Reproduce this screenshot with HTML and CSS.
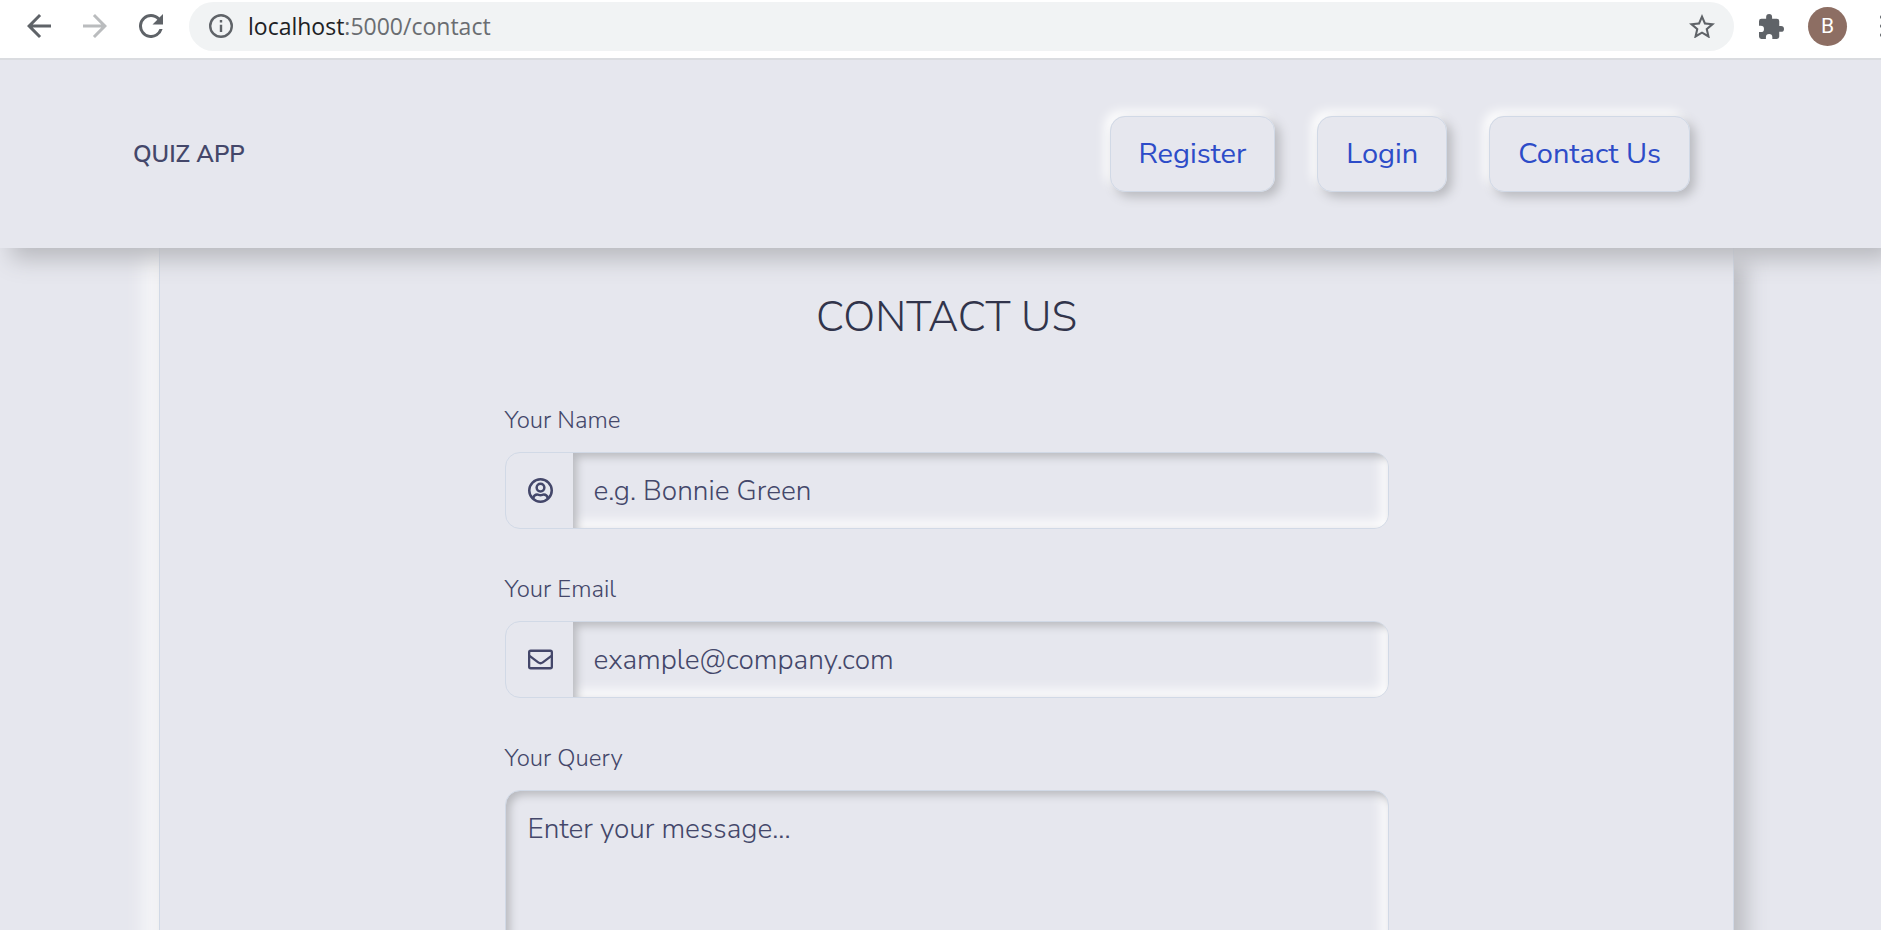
FILE: index.html
```html
<!DOCTYPE html>
<html lang="en">
<head>
<meta charset="utf-8">
<meta name="viewport" content="width=device-width, initial-scale=1">
<title>Quiz App - Contact</title>
<link rel="stylesheet" href="styles.css">
</head>
<body>
<div class="toolbar">
  <button class="tool" type="button" aria-label="Back"><svg viewBox="4 4 16 16"><path d="M20 11H7.83l5.59-5.59L12 4l-8 8 8 8 1.41-1.41L7.83 13H20v-2z"/></svg></button>
  <button class="tool tool-off" type="button" aria-label="Forward"><svg viewBox="4 4 16 16"><path d="M12 4l-1.41 1.41L16.17 11H4v2h12.17l-5.58 5.59L12 20l8-8z"/></svg></button>
  <button class="tool" type="button" aria-label="Reload"><svg viewBox="4 4 16 16"><path d="M17.65 6.35A7.96 7.96 0 0 0 12 4a8 8 0 1 0 7.74 10h-2.08A6 6 0 1 1 12 6c1.66 0 3.14.69 4.22 1.78L13 11h7V4l-2.35 2.35z"/></svg></button>
  <div class="address">
    <svg class="info" viewBox="2 2 20 20"><path d="M11 7h2v2h-2zm0 4h2v6h-2zm1-9a10 10 0 1 0 0 20 10 10 0 0 0 0-20zm0 18a8 8 0 1 1 0-16 8 8 0 0 1 0 16z"/></svg>
    <span class="url"><span class="host">localhost</span>:5000/contact</span>
    <button class="tool star" type="button" aria-label="Bookmark"><svg viewBox="2 2 20 19"><path d="M22 9.24l-7.19-.62L12 2 9.19 8.63 2 9.24l5.46 4.73L5.82 21 12 17.27 18.18 21l-1.63-7.03L22 9.24zM12 15.4l-3.76 2.27 1-4.28-3.32-2.88 4.38-.38L12 6.1l1.71 4.04 4.38.38-3.32 2.88 1 4.28L12 15.4z"/></svg></button>
  </div>
  <button class="tool puzzle" type="button" aria-label="Extensions"><svg viewBox="2 1 21 21"><path d="M20.500 11H19V7a2 2 0 0 0-2-2h-4V3.500a2.500 2.500 0 0 0-5 0V5H4a2 2 0 0 0-2 2v3.800h1.500a2.700 2.700 0 0 1 0 5.400H2V20a2 2 0 0 0 2 2h3.800v-1.500a2.700 2.700 0 0 1 5.400 0V22H17a2 2 0 0 0 2-2v-4h1.500a2.500 2.500 0 0 0 0-5z"/></svg></button>
  <button class="avatar" type="button">B</button>
  <button class="tool dots" type="button" aria-label="Menu"><svg viewBox="0 0 4 22"><circle cx="2" cy="2" r="2"/><circle cx="2" cy="11" r="2"/><circle cx="2" cy="20" r="2"/></svg></button>
</div>
<header class="navbar">
  <a class="brand" href="#">QUIZ APP</a>
  <nav class="links">
    <a class="btn" href="#">Register</a>
    <a class="btn" href="#">Login</a>
    <a class="btn" href="#">Contact Us</a>
  </nav>
</header>
<main class="card">
  <h1 class="title">CONTACT US</h1>
  <form class="form">
    <div class="field">
      <label for="name">Your Name</label>
      <div class="group">
        <span class="addon"><svg viewBox="0 0 24 24" fill="none" stroke="currentColor" stroke-width="2.400"><circle cx="12" cy="12" r="10.800"/><circle cx="12" cy="9.200" r="3.700"/><path d="M4.800 19.500c.8-2.600 2.200-3.600 4-3.600 1.200 0 1.700.6 3.200.6s2-.6 3.200-.6c1.800 0 3.200 1 4 3.600"/></svg></span>
        <input id="name" type="text" placeholder="e.g. Bonnie Green">
      </div>
    </div>
    <div class="field">
      <label for="email">Your Email</label>
      <div class="group">
        <span class="addon"><svg viewBox="0 0 24 24" fill="none" stroke="currentColor" stroke-width="2.200"><rect x="1.100" y="3.600" width="21.800" height="16.800" rx="1.500"/><path d="M1.500 8.500l8.300 6.300c1.600 1.200 2.800 1.200 4.400 0l8.300-6.300"/></svg></span>
        <input id="email" type="email" placeholder="example@company.com">
      </div>
    </div>
    <div class="field">
      <label for="query">Your Query</label>
      <textarea id="query" rows="6" placeholder="Enter your message..."></textarea>
    </div>
  </form>
</main>
</body>
</html>
```
FILE: styles.css
```css
:root {
  --base: #e6e7ee;
  --line: #d1d9e6;
  --text: #44476a;
  --shade: #b8b9be;
  --font: "Nunito Sans", "Nunito", "Lato", "Open Sans", sans-serif;
}
* { box-sizing: border-box; }
body {
  margin: 0;
  height: 100vh;
  overflow: hidden;
  display: flex;
  flex-direction: column;
  background: var(--base);
  color: var(--text);
  font-family: var(--font);
}
button { border: 0; padding: 0; background: none; }
svg { display: block; width: 100%; }

.toolbar {
  flex: none;
  position: relative;
  z-index: 2;
  display: flex;
  align-items: center;
  height: 60px;
  padding: 0 0 6px 27px;
  background: #fff;
  border-bottom: 2px solid #dadce0;
  overflow: hidden;
}
.tool { flex: none; width: 24px; margin-right: 32px; color: #5f6368; }
.tool svg, .info { fill: #5f6368; }
.tool-off svg { fill: #babcbe; }
.address {
  flex: 1;
  display: flex;
  align-items: center;
  height: 49px;
  margin: 0 25px 0 -6px;
  padding: 0 19px 0 20px;
  border-radius: 25px;
  background: #f1f3f4;
}
.info { width: 24px; }
.url {
  flex: 1;
  margin-left: 15px;
  color: #6a6d71;
  font: 23px "Open Sans", sans-serif;
}
.host { color: #202124; }
.star { width: 26px; margin: 0; }
.puzzle { width: 25px; margin-right: 24px; }
.avatar {
  flex: none;
  width: 39px;
  height: 39px;
  border-radius: 50%;
  background: #8d6e63;
  color: #fff;
  font: 21px Roboto, sans-serif;
}
.dots { width: 4px; margin: 0 -3px 0 33px; }

.navbar {
  flex: none;
  position: relative;
  z-index: 1;
  display: flex;
  align-items: center;
  justify-content: space-between;
  height: 188px;
  padding: 0 191px 0 133px;
  background: var(--base);
  box-shadow: 11px 11px 22px var(--shade);
}
.brand {
  color: var(--text);
  font-size: 24px;
  font-weight: 600;
  text-decoration: none;
}
.links { display: flex; gap: 42px; }
.btn {
  padding: 20px 28px;
  border: 1px solid var(--line);
  border-radius: 15px;
  color: #2d4cc8;
  font-size: 29px;
  line-height: 34px;
  text-decoration: none;
  box-shadow: 5px 5px 11px var(--shade), -5px -5px 11px #fff;
}

.card {
  flex: none;
  margin: 0 147px 0 159px;
  padding: 42px 0;
  border: solid var(--line);
  border-width: 0 1px;
  box-shadow: 11px 11px 22px var(--shade), -11px -11px 22px #fff;
}
.title {
  margin: 0;
  color: #31344b;
  font-size: 42px;
  font-weight: 300;
  line-height: 56px;
  text-align: center;
}
.form {
  display: grid;
  gap: 42px;
  max-width: 884px;
  margin: 56px auto 0;
}
.field { display: grid; gap: 14px; font-weight: 300; }
.field label { font-size: 24px; line-height: 36px; }
.group {
  display: flex;
  height: 77px;
  border: 1px solid var(--line);
  border-radius: 15px;
  overflow: hidden;
}
.addon {
  display: grid;
  align-items: center;
  width: 67px;
  padding: 0 20px 0 22px;
}
input, textarea {
  min-width: 0;
  flex: 1;
  margin: 0;
  border: 0;
  background: transparent;
  color: var(--text);
  font: 300 28px/34px var(--font);
  box-shadow: inset 4px 4px 9px var(--shade), inset -6px -6px 13px #fff;
}
input { padding: 0 21px; }
textarea {
  padding: 21px 22px;
  border: 1px solid var(--line);
  border-radius: 15px;
  resize: none;
}
::placeholder { color: var(--text); opacity: 1; }
```
